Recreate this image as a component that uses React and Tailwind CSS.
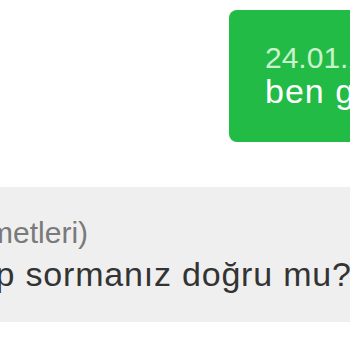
export default function App() {
  return (
    <div
      className="h-[350px] w-[350px] overflow-hidden bg-white"
      style={{ fontFamily: '"Liberation Sans", Arial, sans-serif' }}
    >
      <div className="flex pt-[10px]">
        <div className="ml-[229px] h-[132px] w-[220px] shrink-0 rounded-[8px] bg-[#22bb45] pl-[36px] pt-[30px]">
          <div className="whitespace-nowrap text-[30px] leading-[35px] text-[#c9f3cc]">24.01.2024 14:32</div>
          <div className="whitespace-nowrap text-[34px] leading-[33px] tracking-[1px] text-white">ben geldim</div>
        </div>
      </div>

      <div className="mt-[45px] h-[135px] bg-[#efefef] pt-[28px]">
        <div className="whitespace-nowrap">
          <div className="-ml-[267px] text-[30px] leading-[35px] text-[#7a7a7a]">Cevap (Müşteri Hizmetleri)</div>
          <div className="-ml-[250px] mt-[7px] text-[34px] leading-[35px] tracking-[0.8px] text-[#333333]">Bu soruya cevap sormanız doğru mu?</div>
        </div>
      </div>
    </div>
  )
}
